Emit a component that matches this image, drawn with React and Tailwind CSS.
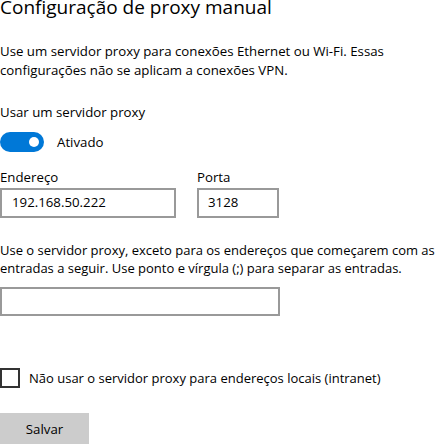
export default function App() {
  const f = { fontFamily: '"Open Sans", "Noto Sans", sans-serif' };
  return (
    <div className="w-[441px] h-[444px] overflow-hidden bg-white text-black text-[13.25px]" style={f}>
      <h1 className="text-[19px] leading-[28px] -mt-[7px] font-normal">Configuração de proxy manual</h1>
      <p className="mt-[21px] leading-[19px]">
        Use um servidor proxy para conexões Ethernet ou Wi-Fi. Essas configurações não se aplicam a conexões VPN.
      </p>
      <div className="mt-[23px] leading-[19px]">Usar um servidor proxy</div>
      <div className="mt-[10px] flex items-center gap-[13px]">
        <div className="w-[44px] h-[20px] rounded-full bg-[#0078d7] flex items-center justify-end pr-[5px]">
          <div className="w-[10px] h-[10px] rounded-full bg-white" />
        </div>
        <span className="leading-[19px]">Ativado</span>
      </div>
      <div className="mt-[17px] flex gap-[21px]">
        <div className="flex flex-col">
          <span className="leading-[17px]">Endereço</span>
          <div className="mt-[2px] w-[176px] h-[30px] border-2 border-[#999999] flex items-center pl-[10px]">192.168.50.222</div>
        </div>
        <div className="flex flex-col">
          <span className="leading-[17px]">Porta</span>
          <div className="mt-[2px] w-[82px] h-[30px] border-2 border-[#999999] flex items-center pl-[9px]">3128</div>
        </div>
      </div>
      <p className="mt-[23px] leading-[18px] text-[13px]">
        Use o servidor proxy, exceto para os endereços que começarem com as entradas a seguir. Use ponto e vírgula (;) para separar as entradas.
      </p>
      <div className="mt-[10px] w-[280px] h-[29px] border-2 border-[#999999]" />
      <div className="mt-[52px] flex items-center gap-[9px]">
        <div className="w-[20px] h-[20px] border-2 border-[#333333]" />
        <span className="leading-[19px] text-[13px]">Não usar o servidor proxy para endereços locais (intranet)</span>
      </div>
      <div className="mt-[25px] w-[89px] h-[33px] bg-[#cccccc] flex items-center justify-center">Salvar</div>
    </div>
  );
}
